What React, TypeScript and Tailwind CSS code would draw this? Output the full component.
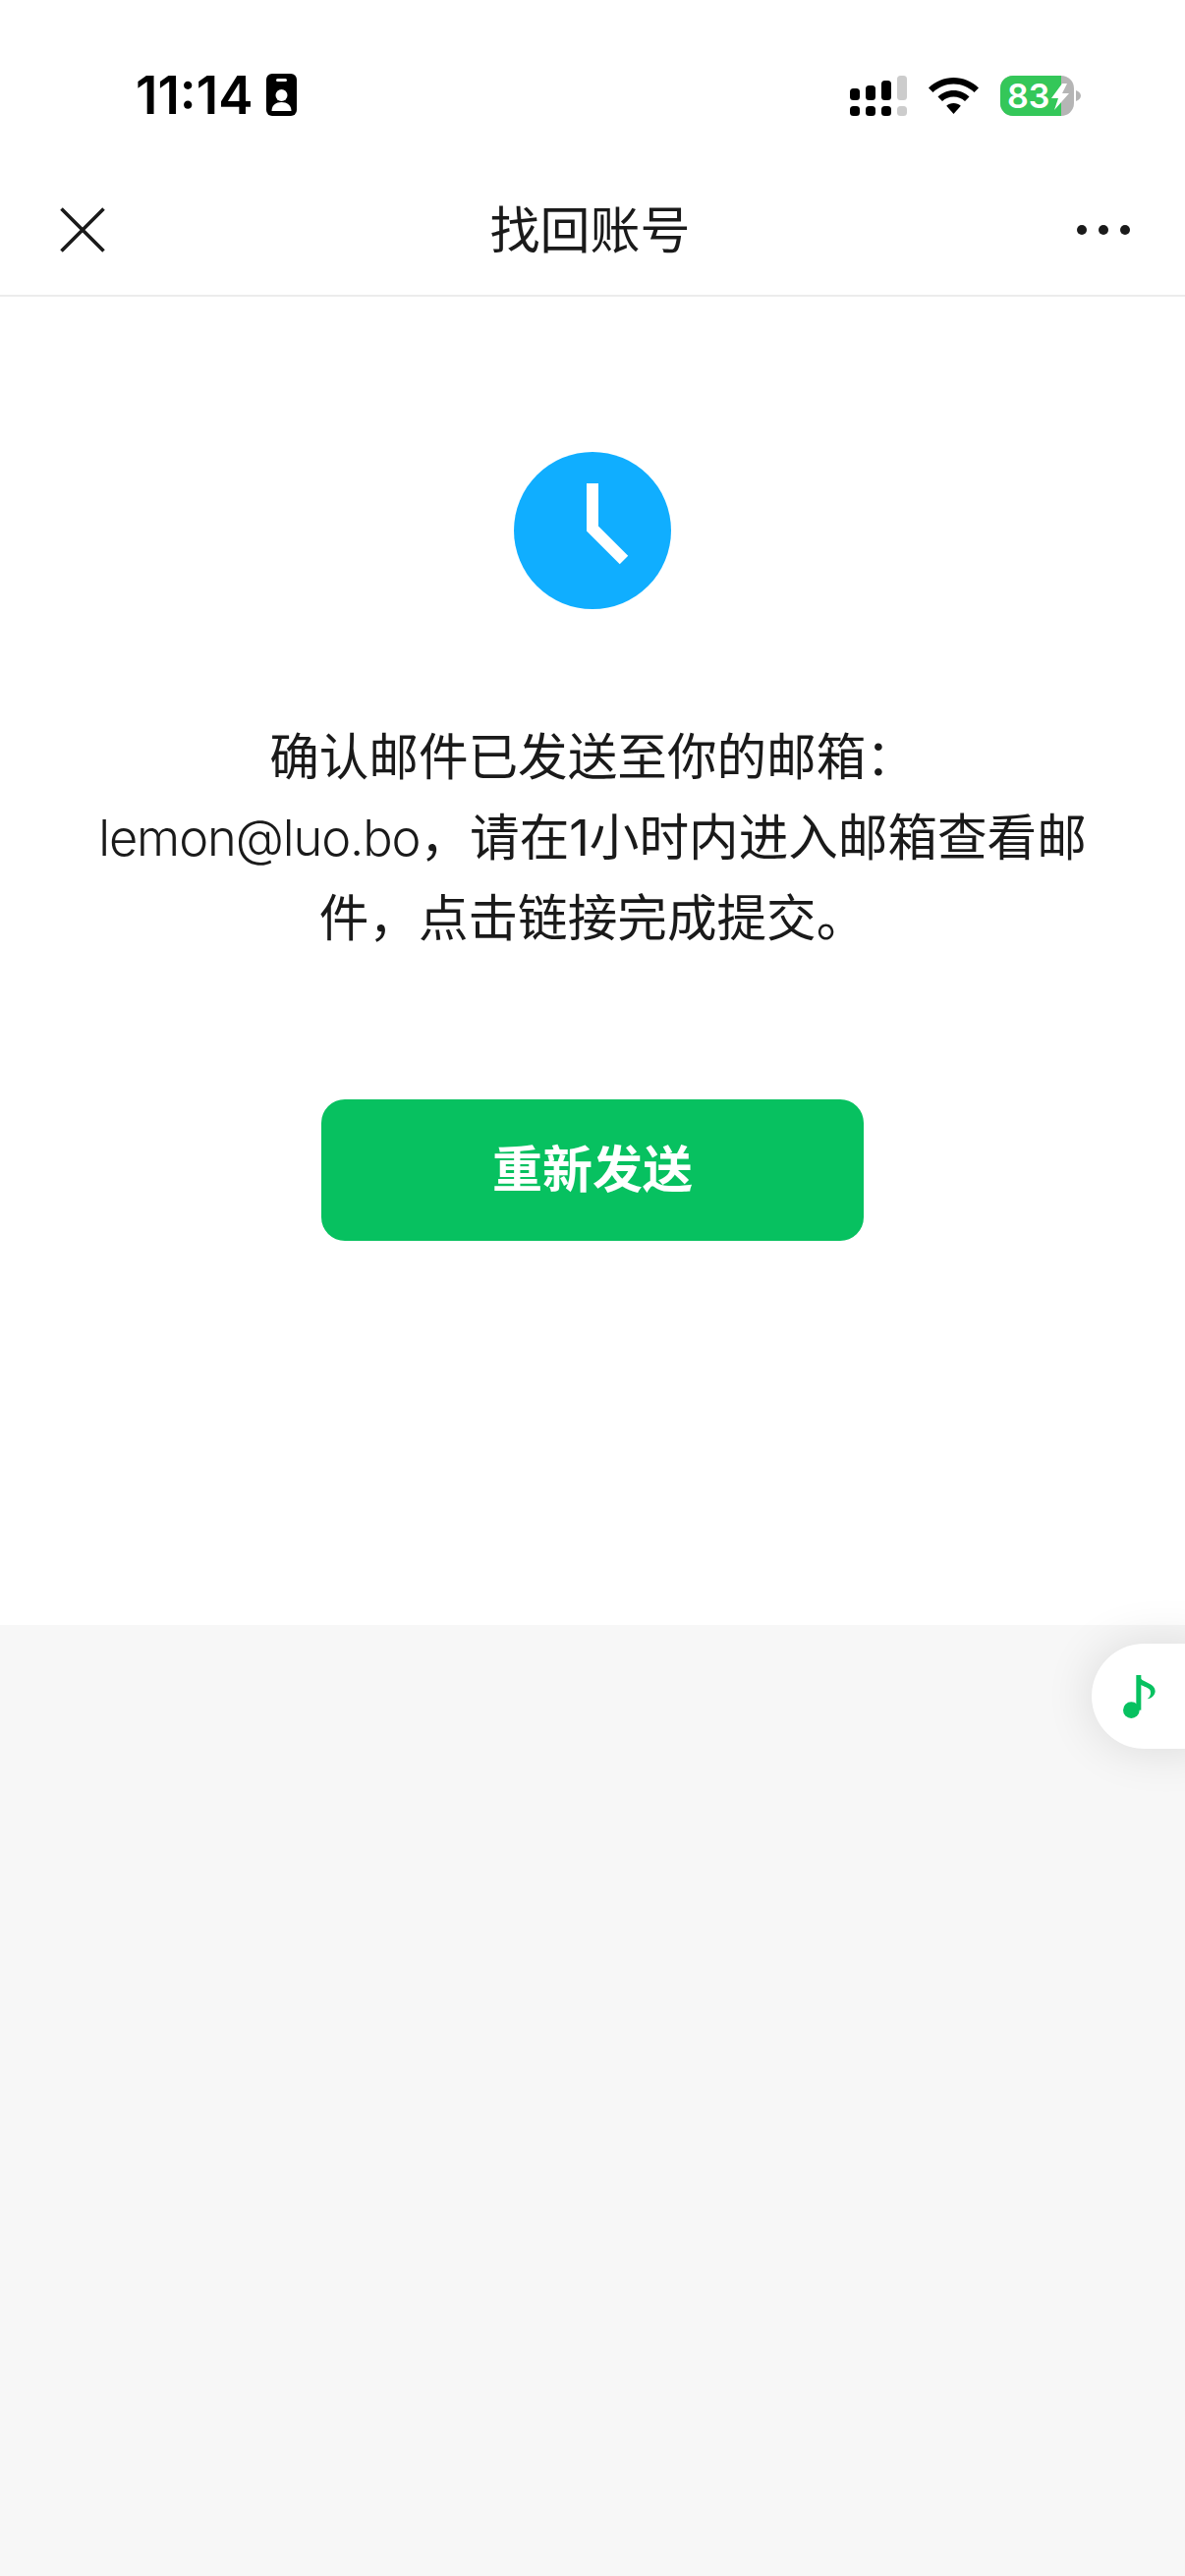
import React from "react";

const CJK = "font-['Inter','Noto_Sans_CJK_SC',sans-serif]";

const BadgeIcon = () => (
  <svg width="31" height="43" viewBox="0 0 31 43" className="ml-[14px] mt-[-2px]">
    <rect width="31" height="43" rx="6" fill="#000" />
    <rect x="10" y="5" width="11" height="3" rx="1.5" fill="#fff" />
    <circle cx="15.5" cy="22" r="6" fill="#fff" />
    <path d="M5.5 38c0-6 4.5-9 10-9s10 3 10 9z" fill="#fff" />
  </svg>
);

const SignalIcon = () => (
  <svg width="58" height="41" viewBox="0 0 58 41">
    <rect x="0" y="13" width="10" height="12" rx="3.5" />
    <rect x="16" y="10" width="10" height="15" rx="3.5" />
    <rect x="32" y="5" width="10" height="20" rx="3.5" />
    <rect x="48" y="0" width="10" height="25" rx="3.5" fill="#ccc" />
    <rect x="0" y="31" width="10" height="10" rx="3.5" />
    <rect x="16" y="31" width="10" height="10" rx="3.5" />
    <rect x="32" y="31" width="10" height="10" rx="3.5" />
    <rect x="48" y="31" width="10" height="10" rx="3.5" fill="#ccc" />
  </svg>
);

const WifiIcon = () => (
  <svg width="51" height="37" viewBox="0 0 51 37" className="ml-[22px]">
    <path d="M25.5 0C35 0 44 3.800 51 10.500L46.500 15C40.800 9.700 33.400 6.500 25.500 6.500S10.200 9.700 4.500 15L0 10.500C7 3.800 16 0 25.500 0z" />
    <path d="M25.500 13C31.600 13 37.200 15.400 41.500 19.500L37 24C33.900 21.200 29.900 19.500 25.500 19.500S17.100 21.200 14 24L9.500 19.500C13.800 15.400 19.400 13 25.500 13z" />
    <path d="M25.500 26C28.300 26 30.800 27 32.800 28.800L25.500 37L18.200 28.800C20.200 27 22.700 26 25.500 26z" />
  </svg>
);

const Battery = () => (
  <div className="ml-[22px] flex items-center">
    <div className="relative flex h-[41px] w-[75px] overflow-hidden rounded-[13px] bg-[#b5b5b5]">
      <div className="flex h-full w-[62px] items-center bg-[#34c759] pl-[7px] font-['Inter',sans-serif] text-[34px] font-semibold leading-none text-white">
        83
      </div>
      <svg width="18" height="27" viewBox="0 0 18 27" fill="#fff" className="absolute left-[52px] top-[8px]">
        <path d="M11 0L0 15h7L3 27l15-17h-7l5-10z" />
      </svg>
    </div>
    <svg width="5" height="11" viewBox="0 0 5 11" fill="#b5b5b5" className="ml-[2px]">
      <path d="M0 0c3 1 5 3 5 5.500S3 10 0 11z" />
    </svg>
  </div>
);

const CloseIcon = () => (
  <svg width="46" height="46" viewBox="0 0 46 46" fill="none" stroke="#1a1a1a" strokeWidth="3.600">
    <path d="M1.500 1.500l43 43M44.500 1.500l-43 43" />
  </svg>
);

const ClockIcon = () => (
  <svg width="160" height="160" viewBox="0 0 160 160">
    <circle cx="80" cy="80" r="80" fill="#10aeff" />
    <path d="M80 32v46l32 32" fill="none" stroke="#fff" strokeWidth="12" />
  </svg>
);

const MusicNote = () => (
  <svg width="34" height="45" viewBox="0 0 100 135" fill="#07c160">
    <circle cx="27" cy="110" r="25" />
    <rect x="42" y="3" width="15" height="107" />
    <path d="M45 3Q52 3 57 15C67 25 100 30 100 52C100 65 88 75 76 76C85 68 88 60 85 50C80 40 65 38 55 32Z" />
  </svg>
);

const App = () => {
  return (
    <div className={`relative flex h-[2622px] w-[1206px] flex-col overflow-hidden bg-[#f7f7f7] ${CJK}`}>
      <div className="bg-white">
        {/* status bar */}
        <div className="flex h-[168px] items-start justify-between pl-[138px] pr-[106px] pt-[77px]">
          <div className="flex items-center">
            <span className="font-['Inter',sans-serif] text-[53px] font-semibold leading-[41px] text-black">
              11:14
            </span>
            <BadgeIcon />
          </div>
          <div className="flex items-center">
            <SignalIcon />
            <WifiIcon />
            <Battery />
          </div>
        </div>

        {/* nav */}
        <div className="flex h-[134px] items-center justify-between border-b-2 border-[#ececec] pl-[61px] pr-[56px]">
          <CloseIcon />
          <h1 className="mr-[2px] mt-[2px] text-[51px] font-normal text-[#1a1a1a]">找回账号</h1>
          <div className="flex gap-[12px]">
            <span className="size-[10px] rounded-full bg-[#1a1a1a]" />
            <span className="size-[10px] rounded-full bg-[#1a1a1a]" />
            <span className="size-[10px] rounded-full bg-[#1a1a1a]" />
          </div>
        </div>

        {/* message */}
        <div className="flex h-[1352px] flex-col items-center pt-[158px]">
          <ClockIcon />
          <p className="mt-[110px] text-center text-[50.6px] font-normal leading-[82px] text-[#1a1a1a]">
            确认邮件已发送至你的邮箱：
            <br />
            <span className="font-light tracking-[-1.1px]">lemon@luo.bo</span>，请在1小时内进入邮箱查看邮
            <br />
            件，点击链接完成提交。
          </p>
          <button className="mt-[143px] h-[144px] w-[552px] rounded-[24px] bg-[#07c160] text-[51px] font-bold text-white">
            重新发送
          </button>
        </div>
      </div>

      {/* floating music button */}
      <div className="absolute left-[1111px] top-[1673px] flex h-[107px] w-[120px] items-center rounded-l-[54px] bg-white pl-[31px] shadow-[0_0_50px_rgba(0,0,0,0.12)]">
        <MusicNote />
      </div>
    </div>
  );
};

export default App;
